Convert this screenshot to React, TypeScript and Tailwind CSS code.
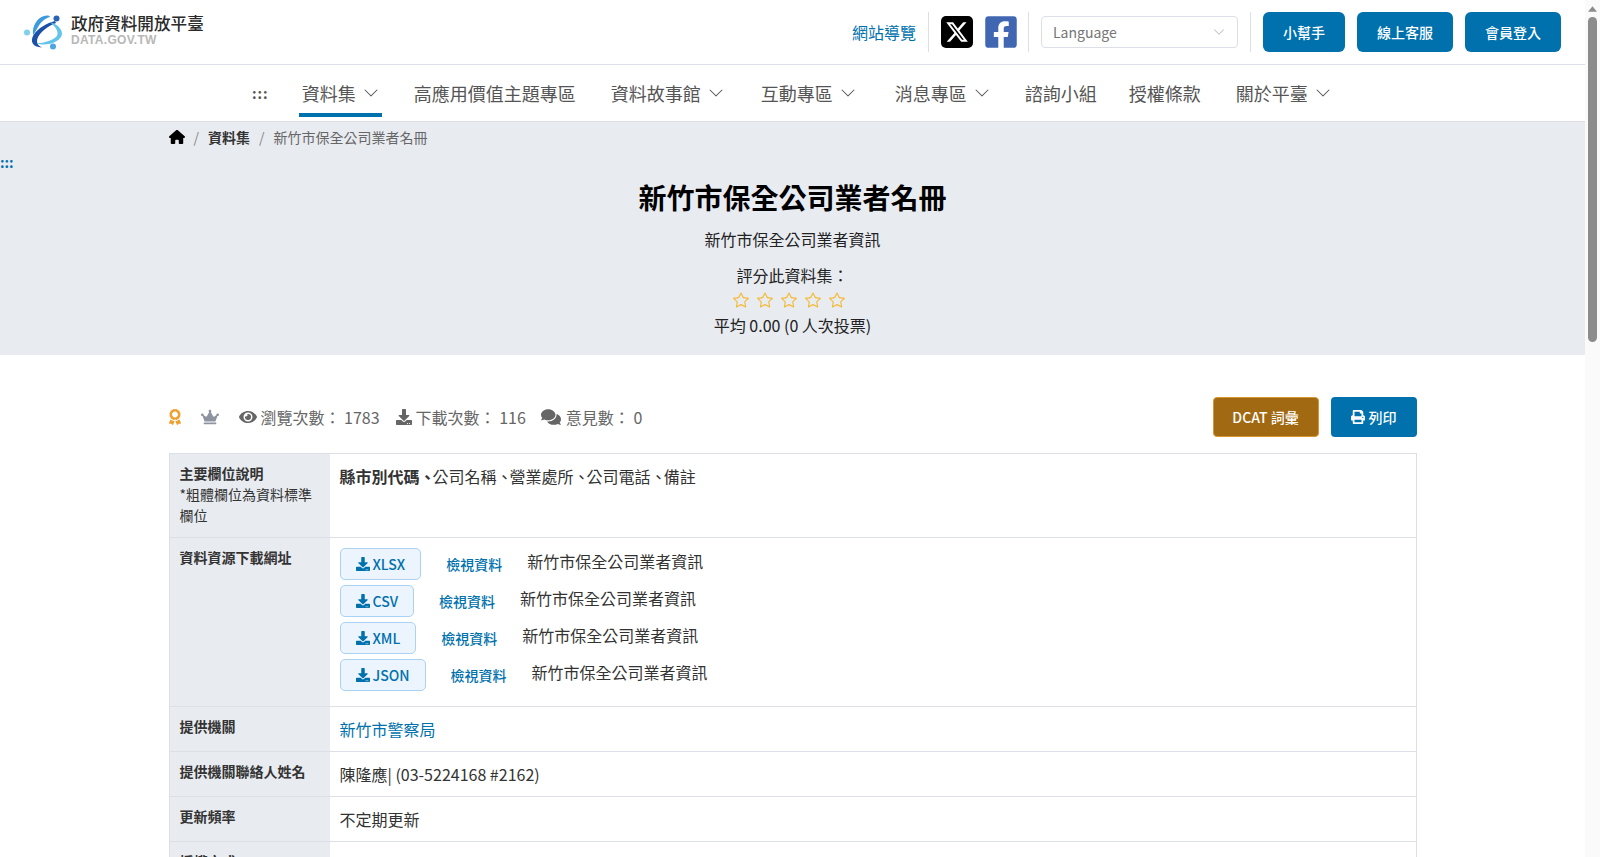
import { BsChevronDown, BsStar } from "react-icons/bs";
import { FaAward, FaComments, FaCrown, FaDownload, FaEye, FaFacebookSquare, FaPrint } from "react-icons/fa";
import { FaHouse, FaXTwitter } from "react-icons/fa6";

const navItems = [
  { label: "資料集", caret: true, active: true, ml: "ml-[33px]" },
  { label: "高應用價值主題專區", ml: "ml-[32px]" },
  { label: "資料故事館", caret: true, ml: "ml-[35px]" },
  { label: "互動專區", caret: true, ml: "ml-[37px]" },
  { label: "消息專區", caret: true, ml: "ml-[39px]" },
  { label: "諮詢小組", ml: "ml-[35px]" },
  { label: "授權條款", ml: "ml-[32px]" },
  { label: "關於平臺", caret: true, ml: "ml-[35px]" },
];

const downloads = ["XLSX", "CSV", "XML", "JSON"];

function Logo() {
  return (
    <svg viewBox="24 13 42 38" className="w-[42px] h-[38px] shrink-0">
      <path d="M33 35C32 26 37 18 44 16C47 15 50 15.500 50 17C45 18 40 23 37.500 28C36 30.500 34.500 33 33 35Z" fill="#3d9bdc" />
      <path d="M55 21C47 23 38 28 33.500 35C30 41 32 47 42 47.500C38.500 46 36 43 37.500 38.500C40 32 48 26 56 23Z" fill="#1c4fa8" />
      <path d="M50 22C57 24 62 29 62 33.500C62 40 52 45 42 44.500C39 44.300 37.500 43.500 37 43C44 43.500 53 40 56.500 36.500C59.500 33 56 27 50 22Z" fill="#62c4ea" />
      <circle cx="56.500" cy="18.500" r="3" fill="#2a62b8" />
      <circle cx="27" cy="32.500" r="3" fill="#7fd0ef" />
      <circle cx="53" cy="46.500" r="3" fill="#4da6e0" />
    </svg>
  );
}

function Divider() {
  return <div className="w-px h-[40px] bg-[#dcdfe6]" />;
}

function HeadBtn({ label, w }: { label: string; w: string }) {
  return (
    <button className={`${w} h-[40px] rounded-[6px] bg-[#0071ad] text-white text-[14px] font-medium`}>{label}</button>
  );
}

function Row({ label, h, children }: { label: React.ReactNode; h: string; children: React.ReactNode }) {
  return (
    <div className={`flex ${h} border-b border-[#dcdfe6]`}>
      <div className="w-[160px] shrink-0 bg-[#e8ebf0] px-[10px] pt-[9px] text-[14px] leading-[21px] text-[#333]">{label}</div>
      <div className="flex-1 px-[10px] pt-[10px] text-[16px] leading-[24px] text-[#333]">{children}</div>
    </div>
  );
}

function Dun() {
  return <span className="tracking-[-3px]">、</span>;
}

export default function App() {
  return (
    <div className="flex h-[857px] overflow-hidden bg-white font-['Noto_Sans_CJK_TC',sans-serif]">
      <div className="flex-1 min-w-0">
        <header className="flex items-center h-[65px] border-b border-[#dcdfe6] pl-[24px] pr-[24px]">
          <Logo />
          <div className="ml-[5px] -mt-[5px]">
            <div className="text-[16.600px] leading-[20px] font-medium text-[#2b2b2b] whitespace-nowrap">政府資料開放平臺</div>
            <div className="mt-[1px] font-['Liberation_Sans',sans-serif] text-[12px] leading-[13px] font-bold tracking-[0.3px] text-[#b8b8b8]">DATA.GOV.TW</div>
          </div>
          <div className="ml-auto flex items-center">
            <a className="text-[16px] text-[#0071ad]">網站導覽</a>
            <div className="ml-[12px]"><Divider /></div>
            <div className="ml-[12px] flex items-center justify-center w-[32px] h-[32px] rounded-[5px] bg-black text-white">
              <FaXTwitter size={24} />
            </div>
            <FaFacebookSquare className="ml-[10px] text-[#4267b2]" size={36} />
            <div className="ml-[9px]"><Divider /></div>
            <div className="ml-[12px] flex items-center justify-between w-[197px] h-[32px] rounded-[4px] border border-[#dcdfe6] pl-[11px] pr-[12px] text-[14px] text-[#757575]">
              Language
              <BsChevronDown size={12} className="text-[#b0b4bc]" />
            </div>
            <div className="ml-[12px]"><Divider /></div>
            <div className="ml-[12px] flex gap-[12px]">
              <HeadBtn label="小幫手" w="w-[82px]" />
              <HeadBtn label="線上客服" w="w-[96px]" />
              <HeadBtn label="會員登入" w="w-[96px]" />
            </div>
          </div>
        </header>

        <nav className="flex items-stretch h-[57px] border-b border-[#dcdfe6] pl-[252px] text-[18px] text-[#555]">
          <span className="self-center text-[14px] font-bold tracking-[1px] text-[#555]">:::</span>
          {navItems.map((item) => (
            <div key={item.label} className={`${item.ml} flex flex-col`}>
              <div className={`flex flex-1 items-center gap-[7px] ${item.active ? "-ml-[3px] px-[3px] mb-[4px] border-b-[4px] border-[#0071ad] pt-[8px]" : ""}`}>
                {item.label}
                {item.caret && <BsChevronDown size={16} />}
              </div>
            </div>
          ))}
        </nav>

        <section className="h-[233px] bg-[#e8ebf0]">
          <div className="flex items-center w-[1280px] mx-auto px-[16px] h-[30px] text-[14px] text-[#666]">
            <FaHouse size={16} className="text-black" />
            <span className="mx-[9px] text-[#8a8a8a]">/</span>
            <span className="font-bold text-[#333]">資料集</span>
            <span className="mx-[9px] text-[#8a8a8a]">/</span>
            <span>新竹市保全公司業者名冊</span>
          </div>
          <div className="mt-[4px] h-[12px] text-[14px] leading-[12px] font-bold text-[#0071ad]">:::</div>
          <div className="text-center text-black">
            <h1 className="mt-[9px] text-[28px] leading-[40px] font-bold">新竹市保全公司業者名冊</h1>
            <p className="mt-[10px] text-[16px] leading-[24px] text-[#222]">新竹市保全公司業者資訊</p>
            <p className="mt-[12px] text-[16px] leading-[24px] text-[#222]">評分此資料集：</p>
            <div className="mt-[1px] flex justify-center gap-[8px] h-[24px] items-center pr-[8px]">
              {[0, 1, 2, 3, 4].map((i) => (
                <BsStar key={i} size={16} className="text-[#f5b82e]" />
              ))}
            </div>
            <p className="mt-[1px] text-[16px] leading-[24px] text-[#222]">平均 0.00 (0 人次投票)</p>
          </div>
        </section>

        <main className="w-[1280px] mx-auto px-[16px]">
          <div className="flex items-center mt-[42px] h-[40px] text-[16px] text-[#666]">
            <FaAward size={16} className="text-[#efa02f] -ml-[2px]" />
            <FaCrown size={18} className="ml-[18px] text-[#8e93a0]" />
            <FaEye size={18} className="ml-[20px]" />
            <span className="ml-[4px]">瀏覽次數： 1783</span>
            <FaDownload size={16} className="ml-[16px]" />
            <span className="ml-[4px]">下載次數： 116</span>
            <FaComments size={20} className="ml-[15px]" />
            <span className="ml-[5px]">意見數： 0</span>
            <div className="ml-auto flex gap-[12px]">
              <button className="w-[106px] h-[40px] rounded-[4px] border border-[#d9952f] bg-[#a16912] text-[14px] font-medium text-white">DCAT 詞彙</button>
              <button className="flex items-center justify-center gap-[4px] w-[86px] h-[40px] rounded-[4px] bg-[#0071ad] text-[14px] font-medium text-white">
                <FaPrint size={14} />
                列印
              </button>
            </div>
          </div>

          <div className="mt-[16px] border-x border-t border-[#dcdfe6]">
            <Row
              h="h-[84px]"
              label={
                <>
                  <b>主要欄位說明</b>
                  <br />
                  *粗體欄位為資料標準欄位
                </>
              }
            >
              <b>縣市別代碼<Dun /></b>公司名稱<Dun />營業處所<Dun />公司電話<Dun />備註
            </Row>
            <Row h="h-[169px]" label={<b>資料資源下載網址</b>}>
              <div className="flex flex-col gap-[5px]">
                {downloads.map((type) => (
                  <div key={type} className="flex items-center">
                    <button className="flex items-center gap-[3px] h-[32px] px-[15px] rounded-[5px] border border-[#a9d2f5] bg-[#ecf4fd] text-[14px] font-medium text-[#0071ad]">
                      <FaDownload size={14} />
                      {type}
                    </button>
                    <a className="ml-[25px] text-[14px] font-medium text-[#0071ad]">檢視資料</a>
                    <span className="ml-[25px] -mt-[6px]">新竹市保全公司業者資訊</span>
                  </div>
                ))}
              </div>
            </Row>
            <Row h="h-[45px]" label={<b>提供機關</b>}>
              <a className="text-[#0071ad]">新竹市警察局</a>
            </Row>
            <Row h="h-[45px]" label={<b>提供機關聯絡人姓名</b>}>
              陳隆應| (03-5224168 #2162)
            </Row>
            <Row h="h-[45px]" label={<b>更新頻率</b>}>
              不定期更新
            </Row>
            <Row h="h-[45px]" label={<b>授權方式</b>}>
              政府資料開放授權條款-第1版
            </Row>
          </div>
        </main>
      </div>

      <div className="flex flex-col items-center w-[15px] shrink-0 bg-[#fafafa]">
        <svg viewBox="0 0 10 6" className="mt-[6px] w-[9px] h-[6px]">
          <path d="M5 0L10 6H0Z" fill="#8c8c8c" />
        </svg>
        <div className="mt-[5px] w-[9px] h-[325px] rounded-[5px] bg-[#8c8c8c]" />
      </div>
    </div>
  );
}
